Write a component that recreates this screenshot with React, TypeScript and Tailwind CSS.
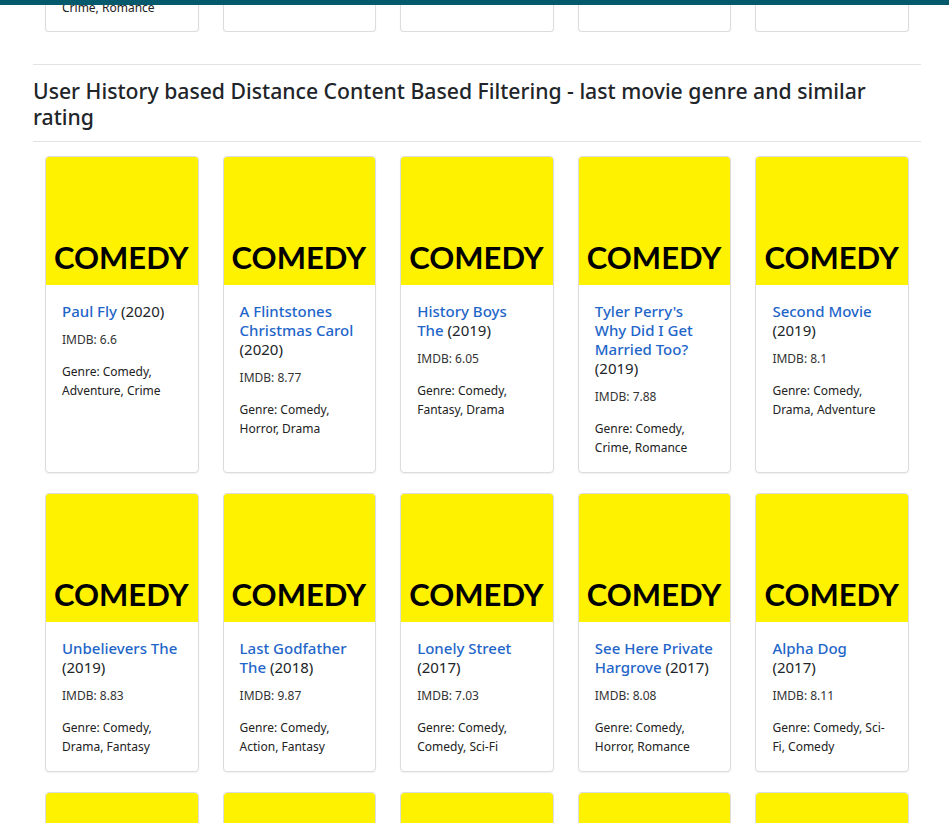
import React from "react";

type Movie = {
  title: string;
  year: string;
  imdb: string;
  genre: string;
};

const rowOne: Movie[] = [
  { title: "Paul Fly", year: "2020", imdb: "6.6", genre: "Comedy, Adventure, Crime" },
  { title: "A Flintstones Christmas Carol", year: "2020", imdb: "8.77", genre: "Comedy, Horror, Drama" },
  { title: "History Boys The", year: "2019", imdb: "6.05", genre: "Comedy, Fantasy, Drama" },
  { title: "Tyler Perry's Why Did I Get Married Too?", year: "2019", imdb: "7.88", genre: "Comedy, Crime, Romance" },
  { title: "Second Movie", year: "2019", imdb: "8.1", genre: "Comedy, Drama, Adventure" },
];

const rowTwo: Movie[] = [
  { title: "Unbelievers The", year: "2019", imdb: "8.83", genre: "Comedy, Drama, Fantasy" },
  { title: "Last Godfather The", year: "2018", imdb: "9.87", genre: "Comedy, Action, Fantasy" },
  { title: "Lonely Street", year: "2017", imdb: "7.03", genre: "Comedy, Comedy, Sci-Fi" },
  { title: "See Here Private Hargrove", year: "2017", imdb: "8.08", genre: "Comedy, Horror, Romance" },
  { title: "Alpha Dog", year: "2017", imdb: "8.11", genre: "Comedy, Sci-Fi, Comedy" },
];

const font = "font-['Noto_Sans','Open_Sans',sans-serif]";

function Poster() {
  return (
    <div className="h-[128px] bg-[#fff200] rounded-t-[3px] flex items-end px-[8px] pb-[12px]">
      <span className="font-['Lato','Liberation_Sans',sans-serif] font-bold text-[31px] leading-none text-black">
        COMEDY
      </span>
    </div>
  );
}

function MovieCard({ movie }: { movie: Movie }) {
  return (
    <div className="border border-[#dcdcdc] rounded-[4px] bg-white flex flex-col shadow-[0_1px_2px_rgba(0,0,0,0.06)]">
      <Poster />
      <div className="px-4 pt-[17px] pb-[15px] text-[#212529]">
        <h5 className="text-[15px] leading-[19px] mb-[9px]">
          <a href="#" className="text-[#1f66c9] font-medium">
            {movie.title}
          </a>{" "}
          <span>({movie.year})</span>
        </h5>
        <p className="text-[12px] leading-[19px] mb-[13px] text-[#333]">IMDB: {movie.imdb}</p>
        <p className="text-[12px] leading-[19px] text-[#222]">Genre: {movie.genre}</p>
      </div>
    </div>
  );
}

export default function App() {
  return (
    <div className={`min-h-screen bg-white ${font}`}>
      <div className="h-[5px] bg-[#045a6c]" />

      <div className="ml-[33px] w-[888px]">
        {/* tail of the previous row, scrolled past */}
        <div className="h-[27px] overflow-hidden flex flex-col justify-end px-3">
          <div className="grid grid-cols-5 gap-x-6">
            {["Crime, Romance", "", "", "", ""].map((line, i) => (
              <div
                key={i}
                className="h-[60px] border border-t-0 border-[#dcdcdc] rounded-b-[4px] px-4 pb-[14px] flex flex-col justify-end text-[12px] leading-[19px] text-[#222] shadow-[0_1px_2px_rgba(0,0,0,0.06)]"
              >
                <span className="h-[19px]">{line}</span>
              </div>
            ))}
          </div>
        </div>

        <hr className="mt-[32px] border-[#e3e3e3]" />
        <h4 className="pt-[13px] pb-[11px] text-[21.2px] leading-[26px] font-medium text-[#212529]">
          User History based Distance Content Based Filtering - last movie genre and similar rating
        </h4>
        <hr className="border-[#e3e3e3]" />

        <div className="px-3 pt-[14px] grid grid-cols-5 gap-x-6 gap-y-5">
          {[...rowOne, ...rowTwo].map((m) => (
            <MovieCard key={m.title} movie={m} />
          ))}
          {[0, 1, 2, 3, 4].map((i) => (
            <div key={i} className="border border-[#dcdcdc] rounded-[4px] overflow-hidden">
              <Poster />
            </div>
          ))}
        </div>
      </div>
    </div>
  );
}
